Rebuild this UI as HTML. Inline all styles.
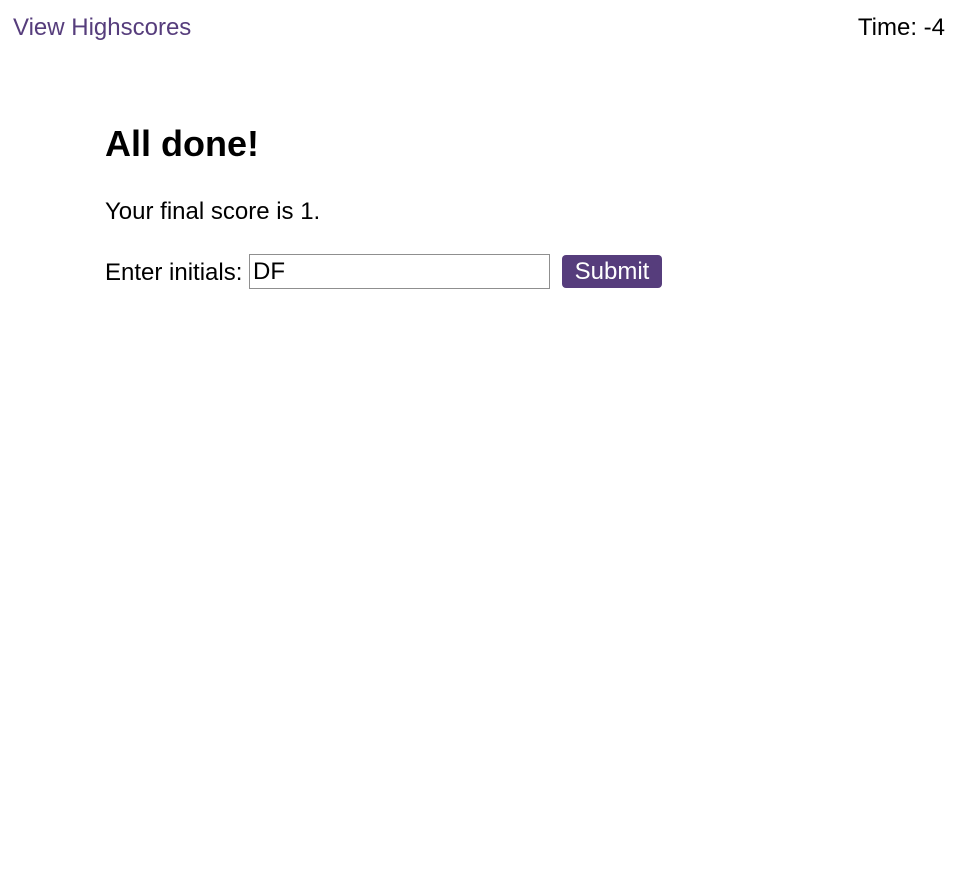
<!DOCTYPE html>
<html><head><meta charset="utf-8"><style>
body{margin:0;width:957px;height:871px;background:#fff;font-family:"Liberation Sans",Arial,sans-serif;position:relative;color:#000}
.hs{position:absolute;left:13px;top:14px;font-size:24px;color:#563d7c}
.time{position:absolute;right:12px;top:14px;font-size:24px}
h1{position:absolute;left:105px;top:123px;margin:0;font-size:36px;font-weight:bold}
.score{position:absolute;left:105px;top:198px;font-size:24px}
.lbl{position:absolute;left:105px;top:259px;font-size:24px}
.inp{position:absolute;left:249px;top:254px;width:301px;height:35px;border:1px solid #8f8f8f;box-sizing:border-box;font-size:24px;line-height:34px;padding-left:3px}
.btn{position:absolute;left:562px;top:255px;width:100px;height:33px;background:#563d7c;color:#fff;border-radius:4px;font-size:24px;line-height:33px;text-align:center}
</style></head><body>
<div class="hs">View Highscores</div>
<div class="time">Time: -4</div>
<h1>All done!</h1>
<div class="score">Your final score is 1.</div>
<div class="lbl">Enter initials:</div>
<div class="inp">DF</div>
<div class="btn">Submit</div>
</body></html>
